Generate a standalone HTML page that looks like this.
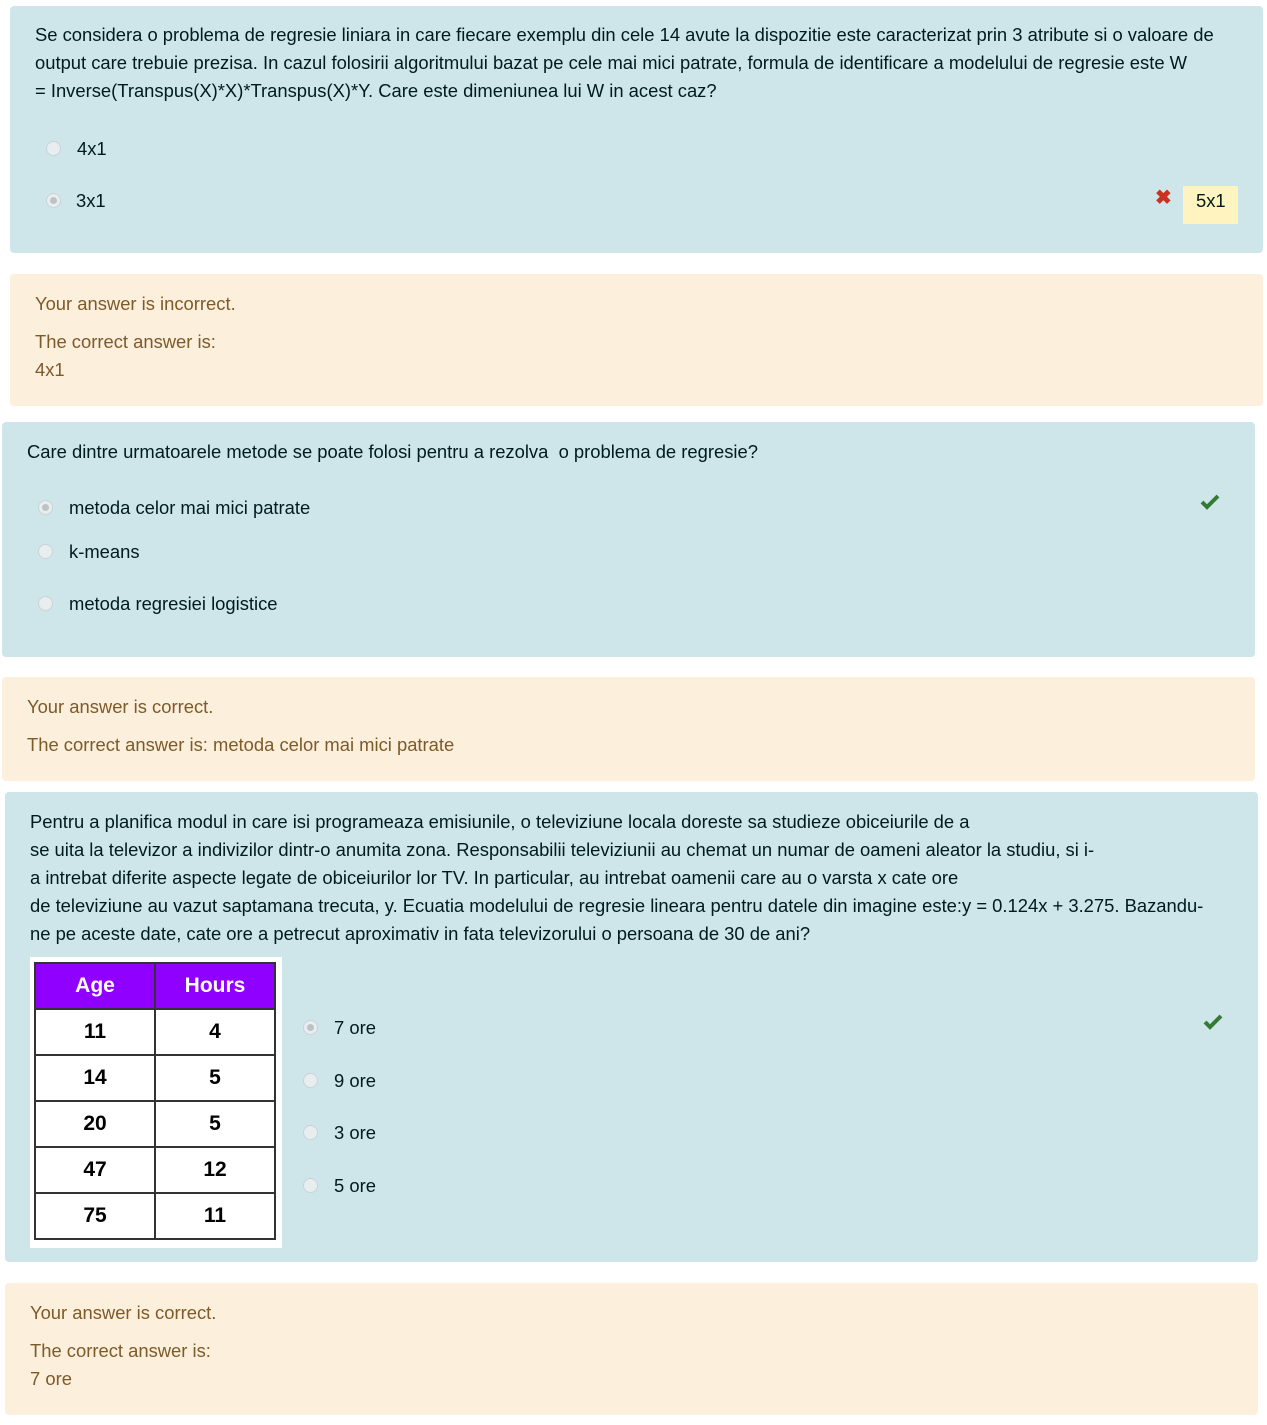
<!DOCTYPE html>
<html><head><meta charset="utf-8"><style>
body{margin:0;width:1267px;height:1425px;background:#fff;font-family:"Liberation Sans",sans-serif;font-size:18.4px;color:#001a1e;position:relative;overflow:hidden}
.b{position:absolute;background:#cee6ea;border-radius:4px}
.f{position:absolute;background:#fcefdc;border-radius:4px;color:#7d5a29}
.t{position:absolute;white-space:nowrap}
.r{position:absolute;width:13px;height:13px;border-radius:50%;background:#e8eef0;border:1px solid #c9d3d6}
.r.s::after{content:"";position:absolute;left:3px;top:3px;width:7px;height:7px;border-radius:50%;background:#bcc3c5}
table{border-collapse:collapse;position:absolute;left:34px;top:962px;font-family:"Liberation Sans",sans-serif;font-weight:bold;font-size:21px}
td{border:2px solid #333;width:116px;height:42px;text-align:center;background:#fff;color:#000}
th{border:2px solid #333;height:42px;background:#9000ff;color:#fff;font-size:21px}
</style></head><body>
<div class="b" style="left:10px;top:6px;width:1253px;height:247px"></div>
<div class="t" style="left:35px;top:21px;line-height:28px">Se considera o problema de regresie liniara in care fiecare exemplu din cele 14 avute la dispozitie este caracterizat prin 3 atribute si o valoare de<br>output care trebuie prezisa. In cazul folosirii algoritmului bazat pe cele mai mici patrate, formula de identificare a modelului de regresie este W<br>= Inverse(Transpus(X)*X)*Transpus(X)*Y. Care este dimeniunea lui W in acest caz?</div>
<div class="r" style="left:46px;top:141px"></div><div class="t" style="left:77px;top:138px">4x1</div>
<div class="r s" style="left:46px;top:193px"></div><div class="t" style="left:76px;top:190px">3x1</div>
<div class="t" style="left:1155px;top:185px;color:#ca3120;font-size:20px;font-weight:bold">✖</div>
<div style="position:absolute;left:1183px;top:186px;width:55px;height:38px;background:#fff3bf"></div><div class="t" style="left:1196px;top:190px">5x1</div>

<div class="f" style="left:10px;top:274px;width:1253px;height:132px"></div>
<div class="t" style="left:35px;top:293px;color:#7d5a29">Your answer is incorrect.</div>
<div class="t" style="left:35px;top:328px;color:#7d5a29;line-height:28px">The correct answer is:<br>4x1</div>

<div class="b" style="left:2px;top:422px;width:1253px;height:235px"></div>
<div class="t" style="left:27px;top:441px">Care dintre urmatoarele metode se poate folosi pentru a rezolva &nbsp;o problema de regresie?</div>
<div class="r s" style="left:38px;top:500px"></div><div class="t" style="left:69px;top:497px">metoda celor mai mici patrate</div>
<svg style="position:absolute;left:1200px;top:494px" width="20" height="16" viewBox="0 0 20 16"><path d="M2 8 L7 13 L18 2" stroke="#357a32" stroke-width="4" fill="none"/></svg>
<div class="r" style="left:38px;top:544px"></div><div class="t" style="left:69px;top:541px">k-means</div>
<div class="r" style="left:38px;top:596px"></div><div class="t" style="left:69px;top:593px">metoda regresiei logistice</div>

<div class="f" style="left:2px;top:677px;width:1253px;height:104px"></div>
<div class="t" style="left:27px;top:696px;color:#7d5a29">Your answer is correct.</div>
<div class="t" style="left:27px;top:734px;color:#7d5a29">The correct answer is: metoda celor mai mici patrate</div>

<div class="b" style="left:5px;top:792px;width:1253px;height:470px"></div>
<div class="t" style="left:30px;top:808px;line-height:28px">Pentru a planifica modul in care isi programeaza emisiunile, o televiziune locala doreste sa studieze obiceiurile de a<br>se uita la televizor a indivizilor dintr-o anumita zona. Responsabilii televiziunii au chemat un numar de oameni aleator la studiu, si i-<br>a intrebat diferite aspecte legate de obiceiurilor lor TV. In particular, au intrebat oamenii care au o varsta x cate ore<br>de televiziune au vazut saptamana trecuta, y. Ecuatia modelului de regresie lineara pentru datele din imagine este:y = 0.124x + 3.275. Bazandu-<br>ne pe aceste date, cate ore a petrecut aproximativ in fata televizorului o persoana de 30 de ani?</div>
<div style="position:absolute;left:30px;top:957px;width:252px;height:291px;background:#fff"></div>
<table><tr><th>Age</th><th>Hours</th></tr><tr><td>11</td><td>4</td></tr><tr><td>14</td><td>5</td></tr><tr><td>20</td><td>5</td></tr><tr><td>47</td><td>12</td></tr><tr><td>75</td><td>11</td></tr></table>
<div class="r s" style="left:303px;top:1020px"></div><div class="t" style="left:334px;top:1017px">7 ore</div>
<svg style="position:absolute;left:1203px;top:1014px" width="20" height="16" viewBox="0 0 20 16"><path d="M2 8 L7 13 L18 2" stroke="#357a32" stroke-width="4" fill="none"/></svg>
<div class="r" style="left:303px;top:1073px"></div><div class="t" style="left:334px;top:1070px">9 ore</div>
<div class="r" style="left:303px;top:1125px"></div><div class="t" style="left:334px;top:1122px">3 ore</div>
<div class="r" style="left:303px;top:1178px"></div><div class="t" style="left:334px;top:1175px">5 ore</div>

<div class="f" style="left:5px;top:1283px;width:1253px;height:132px"></div>
<div class="t" style="left:30px;top:1302px;color:#7d5a29">Your answer is correct.</div>
<div class="t" style="left:30px;top:1337px;color:#7d5a29;line-height:28px">The correct answer is:<br>7 ore</div>
</body></html>
